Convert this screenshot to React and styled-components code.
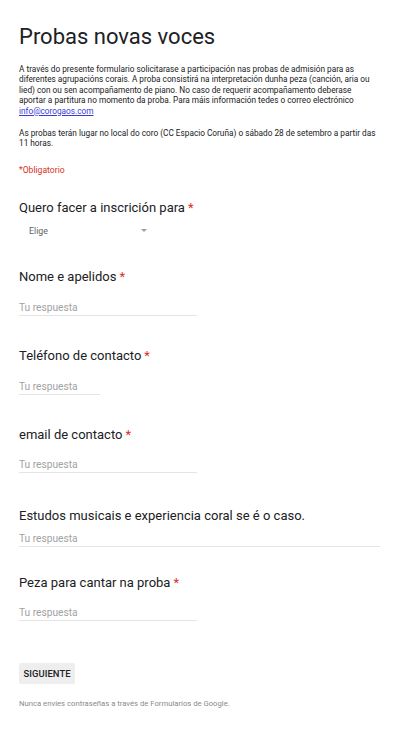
import React from "react";
import styled, { createGlobalStyle } from "styled-components";

const GlobalStyle = createGlobalStyle`
  html, body {
    margin: 0;
    padding: 0;
    background: #ffffff;
  }
  body {
    font-family: Roboto, "Liberation Sans", Arial, sans-serif;
    color: #202124;
  }
`;

const Page = styled.div`
  width: 400px;
  min-height: 732px;
  box-sizing: border-box;
  padding: 22px 20px 0 19px;
  background: #fff;
`;

const Title = styled.h1`
  margin: 0;
  font-size: 22px;
  line-height: 30px;
  font-weight: 400;
  color: #202124;
`;

const Intro = styled.p`
  margin: ${({ $top }) => $top || 0}px 0 0;
  font-size: 8.25px;
  line-height: 10.4px;
  color: #202124;
`;

const Link = styled.a`
  color: #3a3ad6;
  text-decoration: underline;
`;

const Required = styled.div`
  margin-top: 16px;
  font-size: 8.6px;
  line-height: 12px;
  color: #d93025;
`;

const Question = styled.section`
  margin-top: ${({ $top }) => $top}px;
`;

const Label = styled.div`
  font-size: 13px;
  line-height: 16px;
  color: #202124;
`;

const Star = styled.span`
  color: #d93025;
  margin-left: 3px;
`;

const Select = styled.div`
  width: 136px;
  box-sizing: border-box;
  margin-top: 9px;
  padding-left: 10px;
  padding-right: 8px;
  display: flex;
  align-items: center;
  justify-content: space-between;
  font-size: 8.8px;
  line-height: 12px;
  color: #5f6368;
`;

const Arrow = styled.span`
  width: 0;
  height: 0;
  border-left: 3.5px solid transparent;
  border-right: 3.5px solid transparent;
  border-top: 3.5px solid #a0a0a0;
  margin-top: -1px;
`;

const Answer = styled.div`
  width: ${({ $width }) => $width};
  margin-top: ${({ $top }) => $top}px;
  padding-bottom: 1px;
  border-bottom: 1px solid #e4e4e4;
  font-size: 10.2px;
  line-height: 12px;
  color: #a2a2a2;
`;

const Button = styled.button`
  display: block;
  margin-top: 42px;
  width: 56px;
  height: 21px;
  padding: 0;
  border: none;
  border-radius: 2px;
  background: #eeeeee;
  font-family: Roboto, "Liberation Sans", Arial, sans-serif;
  font-size: 9.4px;
  font-weight: 500;
  color: #202124;
  letter-spacing: 0.1px;
`;

const Footer = styled.div`
  margin-top: 14px;
  font-size: 7.7px;
  line-height: 11px;
  color: #8a8a8a;
`;

const questions = [
  { label: "Nome e apelidos", required: true, width: "178px", top: 32.5, gap: 16.3 },
  { label: "Teléfono de contacto", required: true, width: "81px", top: 32.5, gap: 16.3 },
  { label: "email de contacto", required: true, width: "178px", top: 32.5, gap: 16.3 },
  { label: "Estudos musicais e experiencia coral se é o caso.", required: false, width: "100%", top: 34.5, gap: 9.3 },
  { label: "Peza para cantar na proba", required: true, width: "178px", top: 27.5, gap: 16.3 },
];

export default function App() {
  return (
    <>
      <GlobalStyle />
      <Page>
        <Title>Probas novas voces</Title>
        <Intro $top={12}>
          A través do presente formulario solicitarase a participación nas probas de admisión para as
          diferentes agrupacións corais. A proba consistirá na interpretación dunha peza (canción, aria ou
          lied) con ou sen acompañamento de piano. No caso de requerir acompañamento deberase aportar a
          partitura no momento da proba. Para máis información tedes o correo electrónico{" "}
          <Link href="#">info@corogaos.com</Link>
        </Intro>
        <Intro $top={11.6}>
          As probas terán lugar no local do coro (CC Espacio Coruña) o sábado 28 de setembro a partir das
          11 horas.
        </Intro>
        <Required>*Obligatorio</Required>

        <Question $top={23.5}>
          <Label>
            Quero facer a inscrición para<Star>*</Star>
          </Label>
          <Select>
            Elige
            <Arrow />
          </Select>
        </Question>

        {questions.map((q) => (
          <Question key={q.label} $top={q.top}>
            <Label>
              {q.label}
              {q.required && <Star>*</Star>}
            </Label>
            <Answer $width={q.width} $top={q.gap}>
              Tu respuesta
            </Answer>
          </Question>
        ))}

        <Button>SIGUIENTE</Button>
        <Footer>Nunca envíes contraseñas a través de Formularios de Google.</Footer>
      </Page>
    </>
  );
}
